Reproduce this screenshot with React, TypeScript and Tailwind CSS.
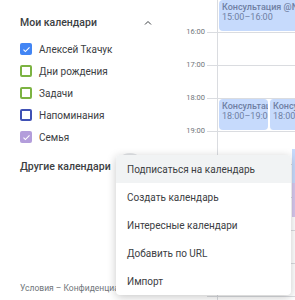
import React from 'react';

const FONT = { fontFamily: 'Roboto, "Noto Sans", Arial, sans-serif' };

interface Cal {
  name: string;
  color: string;
  checked: boolean;
}

const myCalendars: Cal[] = [
  { name: 'Алексей Ткачук', color: '#4285f4', checked: true },
  { name: 'Дни рождения', color: '#7cb342', checked: false },
  { name: 'Задачи', color: '#7cb342', checked: false },
  { name: 'Напоминания', color: '#3f51b5', checked: false },
  { name: 'Семья', color: '#b39ddb', checked: true },
];

const hours = ['15:00', '16:00', '17:00', '18:00', '19:00', '20:00', '21:00', '22:00', '23:00', ''];

const menuItems = [
  'Подписаться на календарь',
  'Создать календарь',
  'Интересные календари',
  'Добавить по URL',
  'Импорт',
];

const Checkbox: React.FC<{ color: string; checked: boolean }> = ({ color, checked }) => (
  <div
    className="w-[12px] h-[12px] rounded-[2px] flex items-center justify-center shrink-0"
    style={checked ? { backgroundColor: color } : { border: `2px solid ${color}` }}
  >
    {checked && (
      <svg width="9" height="9" viewBox="0 0 24 24" fill="none" stroke="white" strokeWidth="3">
        <path d="M4 12.5l5 5L20 6.5" />
      </svg>
    )}
  </div>
);

export default function App() {
  return (
    <div className="relative w-[295px] h-[300px] overflow-hidden bg-white flex" style={FONT}>
      {/* sidebar */}
      <div className="w-[170px] shrink-0 flex flex-col pl-[20px]">
        <div className="flex items-center justify-between h-[20px] mt-[13px] pr-[16px]">
          <span className="text-[10.5px] font-medium text-[#3c4043]">Мои календари</span>
          <svg width="12" height="12" viewBox="0 0 24 24" fill="none" stroke="#3c4043" strokeWidth="2">
            <path d="M6 15l6-6 6 6" />
          </svg>
        </div>
        <div className="flex flex-col mt-[5px]">
          {myCalendars.map(c => (
            <div key={c.name} className="flex items-center gap-[7px] h-[22px]">
              <Checkbox color={c.color} checked={c.checked} />
              <span className="text-[10px] text-[#3c4043]">{c.name}</span>
            </div>
          ))}
        </div>
        <div className="flex items-center justify-between h-[28px] mt-[5px] pr-[26px]">
          <span className="text-[10.5px] font-medium text-[#3c4043] whitespace-nowrap">Другие календари</span>
          <div className="w-[28px] h-[28px] rounded-full bg-[#e3e5e8] shrink-0" />
        </div>
        <div className="mt-auto mb-[5px] text-[8.5px] text-[#70757a] whitespace-nowrap">
          Условия – Конфиденциальность
        </div>
      </div>

      {/* time column */}
      <div className="w-[47px] shrink-0 flex flex-col -mt-px">
        {hours.map((h, i) => (
          <div key={i} className="h-[33px] relative shrink-0">
            {i > 0 && (
              <>
                <span className="absolute right-[12px] -top-[5px] text-[7.5px] leading-[10px] text-[#70757a]">{h}</span>
                <div className="absolute right-0 top-0 w-[10px] border-t border-[#dadce0]" />
              </>
            )}
          </div>
        ))}
      </div>

      {/* day column */}
      <div className="flex-1 relative border-l border-[#dadce0] -mt-px">
        <div className="flex flex-col">
          {hours.map((h, i) => (
            <div key={i} className={`h-[33px] shrink-0 ${i > 0 ? 'border-t border-[#dadce0]' : ''}`} />
          ))}
        </div>
        <div className="absolute top-[1px] left-px w-[120px] h-[31px] rounded-[4px] bg-[#c6dafc] px-[3px] pt-[2px] text-[9px] leading-[10px] text-[#6f7fa3] whitespace-nowrap overflow-hidden">
          <div className="font-medium">Консультация @Nikolay</div>
          <div>15:00–16:00</div>
        </div>
        <div className="absolute top-[100px] left-px w-[49px] h-[31px] rounded-[4px] bg-[#c6dafc] px-[3px] pt-[2px] text-[9px] leading-[10px] text-[#6f7fa3] whitespace-nowrap overflow-hidden">
          <div className="font-medium">Консультация</div>
          <div>18:00–19:00</div>
        </div>
        <div className="absolute top-[100px] left-[51px] w-[60px] h-[31px] rounded-[4px] bg-[#c6dafc] border-l border-white px-[3px] pt-[2px] text-[9px] leading-[10px] text-[#6f7fa3] whitespace-nowrap overflow-hidden">
          <div className="font-medium">Консультация</div>
          <div>18:00–19:00</div>
        </div>
        <div className="absolute top-[150px] left-[74px] w-[20px] h-[34px] bg-[#c6dafc]" />
        <div className="absolute top-[184px] left-[74px] w-[20px] h-[34px] bg-[#d7c8ee]" />
      </div>

      {/* menu */}
      <div className="absolute left-[116px] top-[155px] w-[175px] bg-white rounded-[4px] shadow-[0_2px_10px_rgba(0,0,0,0.22)] flex flex-col overflow-hidden">
        {menuItems.map((m, i) => (
          <div
            key={m}
            className={`h-[28px] flex items-center pl-[11px] text-[10px] text-[#3c4043] ${i === 0 ? 'bg-[#f1f3f4]' : ''}`}
          >
            {m}
          </div>
        ))}
      </div>
    </div>
  );
}
